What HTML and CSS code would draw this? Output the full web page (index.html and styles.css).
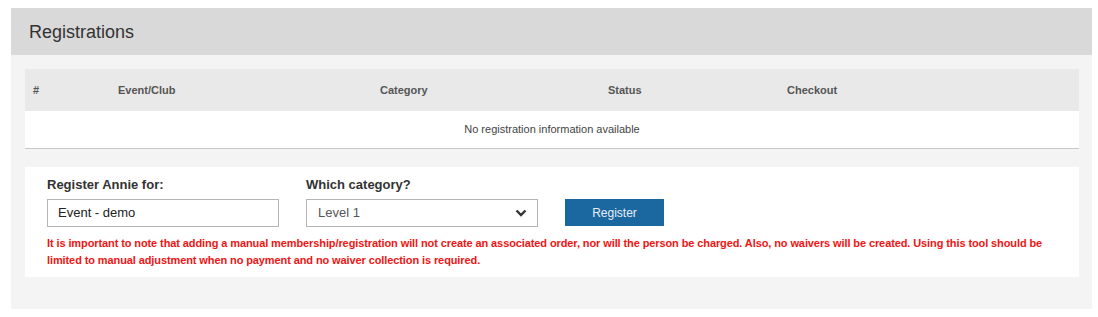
FILE: index.html
```html
<!DOCTYPE html>
<html>
<head>
<meta charset="utf-8">
<link rel="stylesheet" href="styles.css">
</head>
<body>
<div class="panel">
  <div class="panel-header">Registrations</div>
  <div class="panel-body">
    <div class="reg-table">
      <div class="row head">
        <div class="cell">#</div>
        <div class="cell">Event/Club</div>
        <div class="cell">Category</div>
        <div class="cell">Status</div>
        <div class="cell">Checkout</div>
      </div>
      <div class="empty">No registration information available</div>
    </div>
    <div class="form-box">
      <div class="fields">
        <div class="field">
          <label class="label">Register Annie for:</label>
          <div class="input">Event - demo</div>
        </div>
        <div class="field">
          <label class="label">Which category?</label>
          <div class="select">
            <span>Level 1</span>
            <svg class="chev" width="12" height="8" viewBox="0 0 12 8"><path d="M1.5 1.5 L6 6 L10.5 1.5" fill="none" stroke="#333" stroke-width="2.4"/></svg>
          </div>
        </div>
        <button class="btn">Register</button>
      </div>
      <p class="warn">It is important to note that adding a manual membership/registration will not create an associated order, nor will the person be charged. Also, no waivers will be created. Using this tool should be limited to manual adjustment when no payment and no waiver collection is required.</p>
    </div>
  </div>
</div>
</body>
</html>
```

FILE: styles.css
```css
* { box-sizing: border-box; }
body {
  margin: 0;
  padding: 8px 6px 0 11px;
  background: #fff;
  font-family: "Liberation Sans", Arial, sans-serif;
  color: #333;
}
.panel {
  width: 1081px;
  background: #f4f4f4;
}
.panel-header {
  height: 47px;
  background: #d9d9d9;
  padding: 13px 18px 0;
  font-size: 18px;
  line-height: 22px;
  color: #333;
}
.panel-body {
  padding: 14px 13px 32px 14px;
}
.reg-table {
  background: #fff;
  border-bottom: 1px solid #c8c8c8;
}
.row {
  display: grid;
  grid-template-columns: 85px 262px 228px 179px 1fr;
}
.head {
  height: 42px;
  background: #e9e9e9;
  align-items: center;
}
.cell {
  padding-left: 8px;
  font-size: 11px;
  font-weight: bold;
  color: #555;
}
.empty {
  height: 37px;
  line-height: 37px;
  text-align: center;
  font-size: 11px;
  color: #444;
}
.form-box {
  margin-top: 18px;
  background: #fff;
  padding: 10px 22px 8px;
}
.fields {
  display: flex;
  align-items: flex-end;
  gap: 27px;
}
.field {
  display: flex;
  flex-direction: column;
  gap: 6px;
  width: 232px;
}
.label {
  font-size: 13px;
  font-weight: bold;
  line-height: 16px;
  color: #333;
}
.input, .select {
  height: 28px;
  border: 1px solid #b5b5b5;
  font-size: 13px;
  line-height: 26px;
  padding: 0 10px;
  color: #222;
}
.select {
  display: flex;
  justify-content: space-between;
  align-items: center;
  padding: 0 10px 0 11px;
  color: #555;
}
.chev { display: block; }
.btn {
  width: 99px;
  height: 27px;
  margin-bottom: 1px;
  border: none;
  background: #1b67a0;
  color: #e8eef5;
  font-family: "Liberation Sans", Arial, sans-serif;
  font-size: 12px;
  padding: 0;
}
.warn {
  margin: 8px 0 0;
  font-size: 11px;
  line-height: 17px;
  font-weight: bold;
  letter-spacing: -0.1px;
  color: #f01414;
}
```
